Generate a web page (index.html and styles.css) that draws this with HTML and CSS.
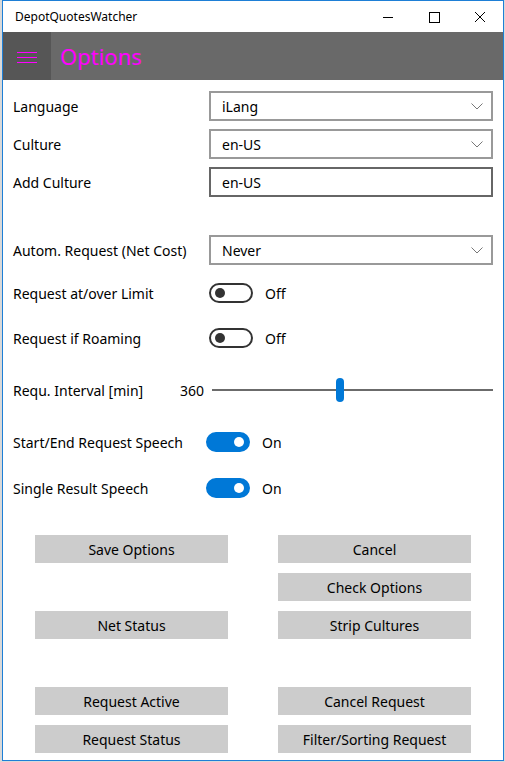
FILE: index.html
```html
<!DOCTYPE html>
<html>
<head>
<meta charset="utf-8">
<meta name="viewport" content="width=device-width, initial-scale=1.0">
<title>DepotQuotesWatcher</title>
<link rel="stylesheet" href="styles.css">
</head>
<body>
<div class="window">
    <div class="titlebar">
        <span class="apptitle">DepotQuotesWatcher</span>
        <div class="caption">
            <svg width="46" height="32" viewBox="0 0 46 32"><line x1="18" y1="16.5" x2="28" y2="16.5" stroke="#000" stroke-width="1"/></svg>
            <svg width="46" height="32" viewBox="0 0 46 32"><rect x="18.5" y="11.5" width="10" height="10" fill="none" stroke="#000" stroke-width="1"/></svg>
            <svg width="46" height="32" viewBox="0 0 46 32"><path d="M18 11 L28 21 M28 11 L18 21" stroke="#000" stroke-width="1"/></svg>
        </div>
    </div>
    <div class="header">
        <div class="burger">
            <svg width="20" height="12" viewBox="0 0 20 12"><path d="M0 1.5H20M0 6.5H20M0 11.5H20" stroke="#f0f" stroke-width="1"/></svg>
        </div>
        <h1>Options</h1>
    </div>

    <div class="form">
        <div class="label">Language</div>
        <div class="combo"><span>iLang</span><svg width="12" height="7" viewBox="0 0 12 7"><polyline points="0.5,0.5 6,6 11.5,0.5" fill="none" stroke="#777" stroke-width="1"/></svg></div>

        <div class="label">Culture</div>
        <div class="combo"><span>en-US</span><svg width="12" height="7" viewBox="0 0 12 7"><polyline points="0.5,0.5 6,6 11.5,0.5" fill="none" stroke="#777" stroke-width="1"/></svg></div>

        <div class="label">Add Culture</div>
        <div class="textbox">en-US</div>

        <div class="spacer"></div>

        <div class="label">Autom. Request (Net Cost)</div>
        <div class="combo"><span>Never</span><svg width="12" height="7" viewBox="0 0 12 7"><polyline points="0.5,0.5 6,6 11.5,0.5" fill="none" stroke="#777" stroke-width="1"/></svg></div>

        <div class="label">Request at/over Limit</div>
        <div class="switch"><span class="toggle"></span><span>Off</span></div>

        <div class="label">Request if Roaming</div>
        <div class="switch"><span class="toggle"></span><span>Off</span></div>

        <div class="label value-label"><span>Requ. Interval [min]</span><span>360</span></div>
        <div class="slider"><span class="track"></span><span class="thumb"></span></div>

        <div class="label">Start/End Request Speech</div>
        <div class="switch on"><span class="toggle"></span><span>On</span></div>

        <div class="label">Single Result Speech</div>
        <div class="switch on"><span class="toggle"></span><span>On</span></div>
    </div>

    <div class="buttons">
        <button>Save Options</button>
        <button>Cancel</button>
        <span></span>
        <button>Check Options</button>
        <button>Net Status</button>
        <button>Strip Cultures</button>
        <span></span>
        <span></span>
        <button>Request Active</button>
        <button>Cancel Request</button>
        <button>Request Status</button>
        <button>Filter/Sorting Request</button>
    </div>
</div>
</body>
</html>
```

FILE: styles.css
```css
body {
    margin: 0;
    background: #d9d9d9;
    font-family: "Noto Sans", "Open Sans", sans-serif;
    font-size: 14px;
    color: #000;
}
.window {
    margin-left: 2px;
    width: 500px;
    height: 759px;
    border: 1px solid #1e7fd6;
    background: #fff;
    overflow: hidden;
}
.titlebar {
    height: 31px;
    display: flex;
    align-items: center;
    justify-content: space-between;
}
.apptitle {
    padding-left: 12px;
    font-size: 12px;
}
.caption {
    display: flex;
    align-self: flex-start;
}
.caption svg {
    display: block;
}
.header {
    height: 48px;
    display: flex;
    align-items: center;
    background: #696969;
}
.burger {
    width: 48px;
    height: 48px;
    background: #565656;
    display: flex;
    align-items: center;
    justify-content: center;
}
.burger svg {
    display: block;
    margin-top: 2px;
}
.header h1 {
    margin: 0 0 0 9px;
    font-weight: normal;
    font-size: 22px;
    color: #f0f;
}
.form {
    display: grid;
    grid-template-columns: 196px 284px;
    grid-template-rows: 30px 30px 30px 22px 30px 40px 34px 54px 34px 42px;
    row-gap: 8px;
    padding: 11px 10px 0 10px;
}
.label {
    display: flex;
    align-items: center;
}
.spacer {
    grid-column: 1 / 3;
}
.value-label {
    justify-content: space-between;
    padding-right: 5px;
}
.combo, .textbox {
    box-sizing: border-box;
    height: 30px;
    border: 2px solid #999;
    padding: 0 8px 0 11px;
    display: flex;
    align-items: center;
    justify-content: space-between;
}
.textbox {
    border-color: #666;
}
.switch {
    display: flex;
    align-items: center;
    gap: 12px;
}
.toggle {
    box-sizing: border-box;
    width: 44px;
    height: 20px;
    border: 2px solid #333;
    border-radius: 10px;
    position: relative;
}
.toggle::after {
    content: "";
    position: absolute;
    left: 4px;
    top: 3px;
    width: 10px;
    height: 10px;
    border-radius: 50%;
    background: #333;
}
.switch.on {
    margin-left: -3px;
}
.switch.on .toggle {
    background: #0078d7;
    border-color: #0078d7;
}
.switch.on .toggle::after {
    left: auto;
    right: 4px;
    background: #fff;
}
.slider {
    position: relative;
    margin-left: 3px;
    display: flex;
    align-items: center;
}
.track {
    flex: 1;
    height: 2px;
    background: #6b6b6b;
}
.thumb {
    position: absolute;
    left: 124px;
    top: 15px;
    width: 8px;
    height: 24px;
    border-radius: 4px;
    background: #0078d7;
}
.buttons {
    display: grid;
    grid-template-columns: 193px 193px;
    grid-auto-rows: 28px;
    column-gap: 50px;
    row-gap: 10px;
    padding: 26px 0 0 32px;
}
.buttons button {
    border: none;
    background: #ccc;
    font-family: inherit;
    font-size: 14px;
    color: #000;
    padding: 0;
}
```
